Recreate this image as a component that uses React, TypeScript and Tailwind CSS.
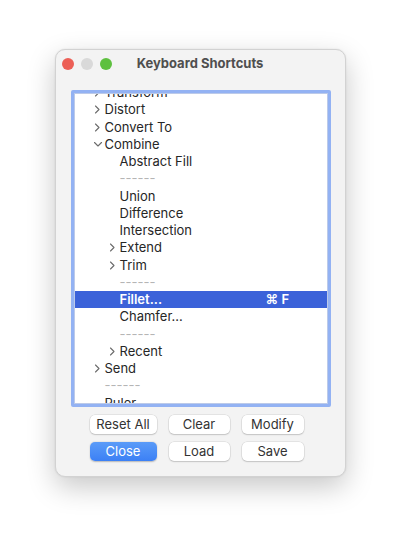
import React from "react";

type Row = {
  label: string;
  level: 0 | 1;
  chevron?: "right" | "down";
  separator?: boolean;
  selected?: boolean;
  shortcut?: string;
};

const rows: Row[] = [
  { label: "Transform", level: 0, chevron: "right" },
  { label: "Distort", level: 0, chevron: "right" },
  { label: "Convert To", level: 0, chevron: "right" },
  { label: "Combine", level: 0, chevron: "down" },
  { label: "Abstract Fill", level: 1 },
  { label: "------", level: 1, separator: true },
  { label: "Union", level: 1 },
  { label: "Difference", level: 1 },
  { label: "Intersection", level: 1 },
  { label: "Extend", level: 1, chevron: "right" },
  { label: "Trim", level: 1, chevron: "right" },
  { label: "------", level: 1, separator: true },
  { label: "Fillet...", level: 1, selected: true, shortcut: "⌘ F" },
  { label: "Chamfer...", level: 1 },
  { label: "------", level: 1, separator: true },
  { label: "Recent", level: 1, chevron: "right" },
  { label: "Send", level: 0, chevron: "right" },
  { label: "------", level: 0, separator: true },
  { label: "Ruler", level: 0 },
];

const Chevron = ({ dir, light }: { dir: "right" | "down"; light?: boolean }) =>
  dir === "right" ? (
    <svg width="11" height="9" viewBox="0 0 11 9" fill="none">
      <path d="M1.5 1L5 4.5L1.5 8" stroke={light ? "#fff" : "#6b6b6b"} strokeWidth="1.1" strokeLinecap="round" strokeLinejoin="round" />
    </svg>
  ) : (
    <svg width="11" height="9" viewBox="0 0 11 9" fill="none">
      <path d="M0.5 2.5L4 6L7.5 2.5" stroke={light ? "#fff" : "#6b6b6b"} strokeWidth="1.1" strokeLinecap="round" strokeLinejoin="round" />
    </svg>
  );

const TreeRow = ({ row }: { row: Row }) => (
  <div
    className={
      "flex h-[17.25px] items-center " +
      (row.level === 0 ? "pl-[19px] " : "pl-[34px] ") +
      (row.selected ? "bg-[#3b62d9] text-white font-semibold" : "text-[#262626]")
    }
  >
    <span className="flex w-[11px] shrink-0 items-center">
      {row.chevron && <Chevron dir={row.chevron} light={row.selected} />}
    </span>
    <span className={"flex-1 leading-[17px] " + (row.separator ? "text-[#b5b5b5]" : "")}>
      {row.label}
    </span>
    {row.shortcut && <span className="w-[61px] shrink-0 leading-[17px]">{row.shortcut}</span>}
  </div>
);

const Button = ({ label, primary, width }: { label: string; primary?: boolean; width: string }) => (
  <button
    className={
      "flex h-[19px] items-center justify-center rounded-[5px] text-[13px] leading-none " +
      width +
      (primary
        ? " bg-gradient-to-b from-[#5a9bf8] to-[#3c80f5] text-white shadow-[0_0.5px_1.5px_rgba(0,0,0,0.25)]"
        : " bg-white text-[#333] shadow-[0_0_0_0.5px_rgba(0,0,0,0.12),0_1px_1.5px_rgba(0,0,0,0.15)]")
    }
  >
    {label}
  </button>
);

export default function App() {
  return (
    <div
      className="flex h-[550px] w-[400px] justify-center bg-white pt-[49px]"
      style={{ fontFamily: "Inter, 'Noto Sans', sans-serif" }}
    >
      <div className="flex h-[428px] w-[291px] flex-col rounded-[10px] border border-[#d2d2d2] bg-[#f3f3f3] shadow-[0_10px_28px_rgba(0,0,0,0.22),0_0_2px_rgba(0,0,0,0.1)]">
        <div className="relative flex h-[27px] items-center gap-[7px] pl-[6px] pt-[1px]">
          <span className="size-[12px] rounded-full bg-[#ec5f56]" />
          <span className="size-[12px] rounded-full bg-[#d9d9d9]" />
          <span className="size-[12px] rounded-full bg-[#5ec03f]" />
          <div className="pointer-events-none absolute inset-0 flex items-center justify-center text-[13px] font-bold text-[#4f4f4f]">
            Keyboard Shortcuts
          </div>
        </div>

        <div className="ml-[15px] mt-[13px] h-[317px] w-[260px] rounded-[2px] border-[3px] border-[#93b2f3]">
          <div className="h-full overflow-hidden border border-[#bccae9] bg-white text-[13px]">
            <div className="-mt-[10px]">
              {rows.map((row, i) => (
                <TreeRow key={i} row={row} />
              ))}
            </div>
          </div>
        </div>

        <div className="ml-[34px] mt-[8px] flex flex-col gap-[8px]">
          <div className="flex gap-[12px]">
            <Button label="Reset All" width="w-[67px]" />
            <Button label="Clear" width="w-[61px]" />
            <Button label="Modify" width="w-[62px]" />
          </div>
          <div className="flex gap-[12px]">
            <Button label="Close" width="w-[67px]" primary />
            <Button label="Load" width="w-[61px]" />
            <Button label="Save" width="w-[62px]" />
          </div>
        </div>
      </div>
    </div>
  );
}
